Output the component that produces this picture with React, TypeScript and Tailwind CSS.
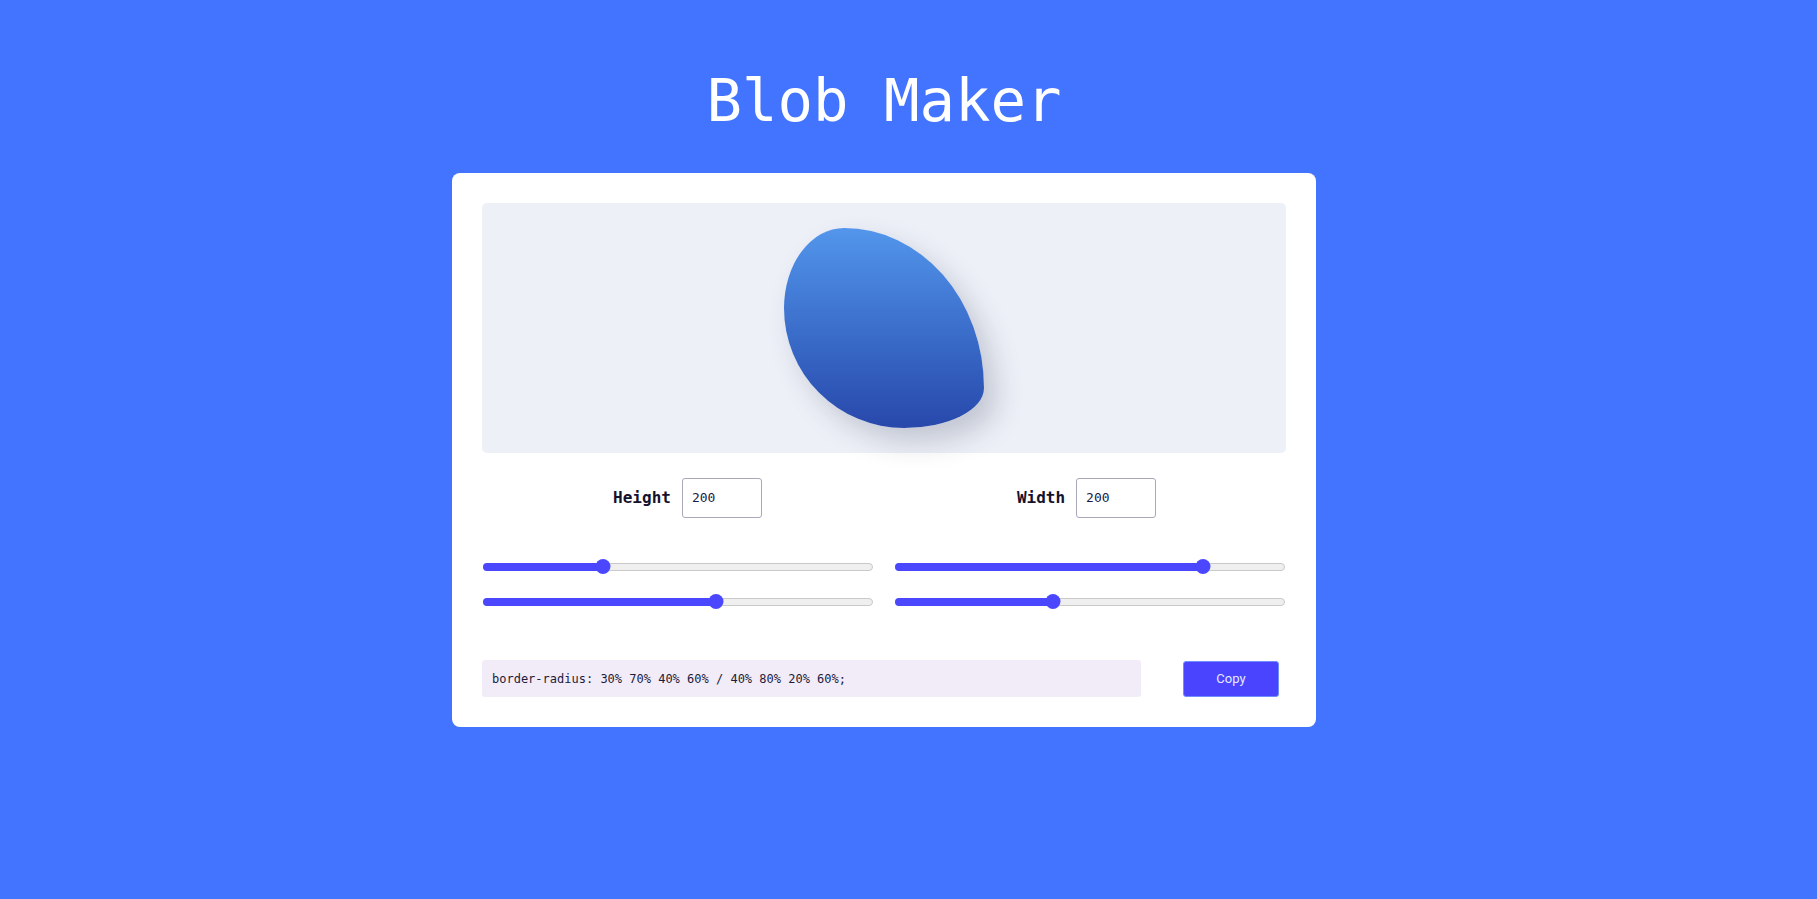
import { useState } from 'react'

const MONO = "font-['DejaVu_Sans_Mono',monospace]"

function RangeBar({ value }: { value: number }) {
  // thumb centre follows the native range formula: 7.5px + v * (width - 15px)
  const pos = `calc(7.5px + ${value / 100} * (100% - 15px))`
  return (
    <div className="relative h-[15px] w-full">
      <div className="absolute left-0 right-0 top-[3.5px] h-[8px] rounded-full border border-[#c9c9c9] bg-[#efefef]" />
      <div
        className="absolute left-0 top-[3.5px] h-[8px] rounded-full bg-[#4a47ff]"
        style={{ width: pos }}
      />
      <div
        className="absolute top-0 h-[15px] w-[15px] -translate-x-1/2 rounded-full bg-[#4a47ff]"
        style={{ left: pos }}
      />
    </div>
  )
}

function SizeField({ label, value }: { label: string; value: string }) {
  return (
    <div className="flex items-center justify-center gap-[11px]">
      <span className={`${MONO} text-[16px] font-bold text-[#15122e]`}>{label}</span>
      <div className={`${MONO} flex h-[40px] w-[80px] items-center rounded-[3px] border border-[#a9a8bb] bg-white pl-[9px] text-[13px] text-[#1c1a4a]`}>
        {value}
      </div>
    </div>
  )
}

export default function App() {
  const [sliders] = useState([30, 80, 60, 40])
  const radius = '30% 70% 40% 60% / 40% 80% 20% 60%'

  return (
    <div className="min-h-[899px] w-full bg-[#4274ff]">
      <div className="flex w-[1768px] flex-col items-center pt-[71px]">
        <h1 className={`${MONO} text-[59px] leading-[60px] font-normal text-white`}>Blob Maker</h1>

        <div className="mt-[42px] w-[864px] rounded-[8px] bg-white p-[30px]">
          <div className="flex h-[250px] items-center justify-center rounded-[5px] bg-[#edf0f7]">
            <div
              className="h-[200px] w-[200px] bg-gradient-to-b from-[#5396ec] to-[#2848ab] shadow-[12px_14px_28px_rgba(40,50,80,0.22)]"
              style={{ borderRadius: radius }}
            />
          </div>

          <div className="mt-[25px] grid grid-cols-2 pl-[6px]">
            <SizeField label="Height" value="200" />
            <SizeField label="Width" value="200" />
          </div>

          <div className="mt-[41px] grid grid-cols-2 gap-x-[22px] gap-y-[20px] pl-px pr-px">
            {sliders.map((v, i) => (
              <RangeBar key={i} value={v} />
            ))}
          </div>

          <div className="mt-[51px] flex items-center justify-between">
            <div className={`${MONO} flex h-[37px] w-[659px] items-center rounded-[3px] bg-[#f2ecf8] pl-[10px] text-[12px] text-[#1d1b3a]`}>
              border-radius: {radius};
            </div>
            <button className="mr-[7px] h-[36px] w-[96px] rounded-[3px] border border-[#6f8dff] bg-[#4b44ff] font-['Roboto',sans-serif] text-[13px] text-[#e4ebff]">
              Copy
            </button>
          </div>
        </div>
      </div>
    </div>
  )
}
